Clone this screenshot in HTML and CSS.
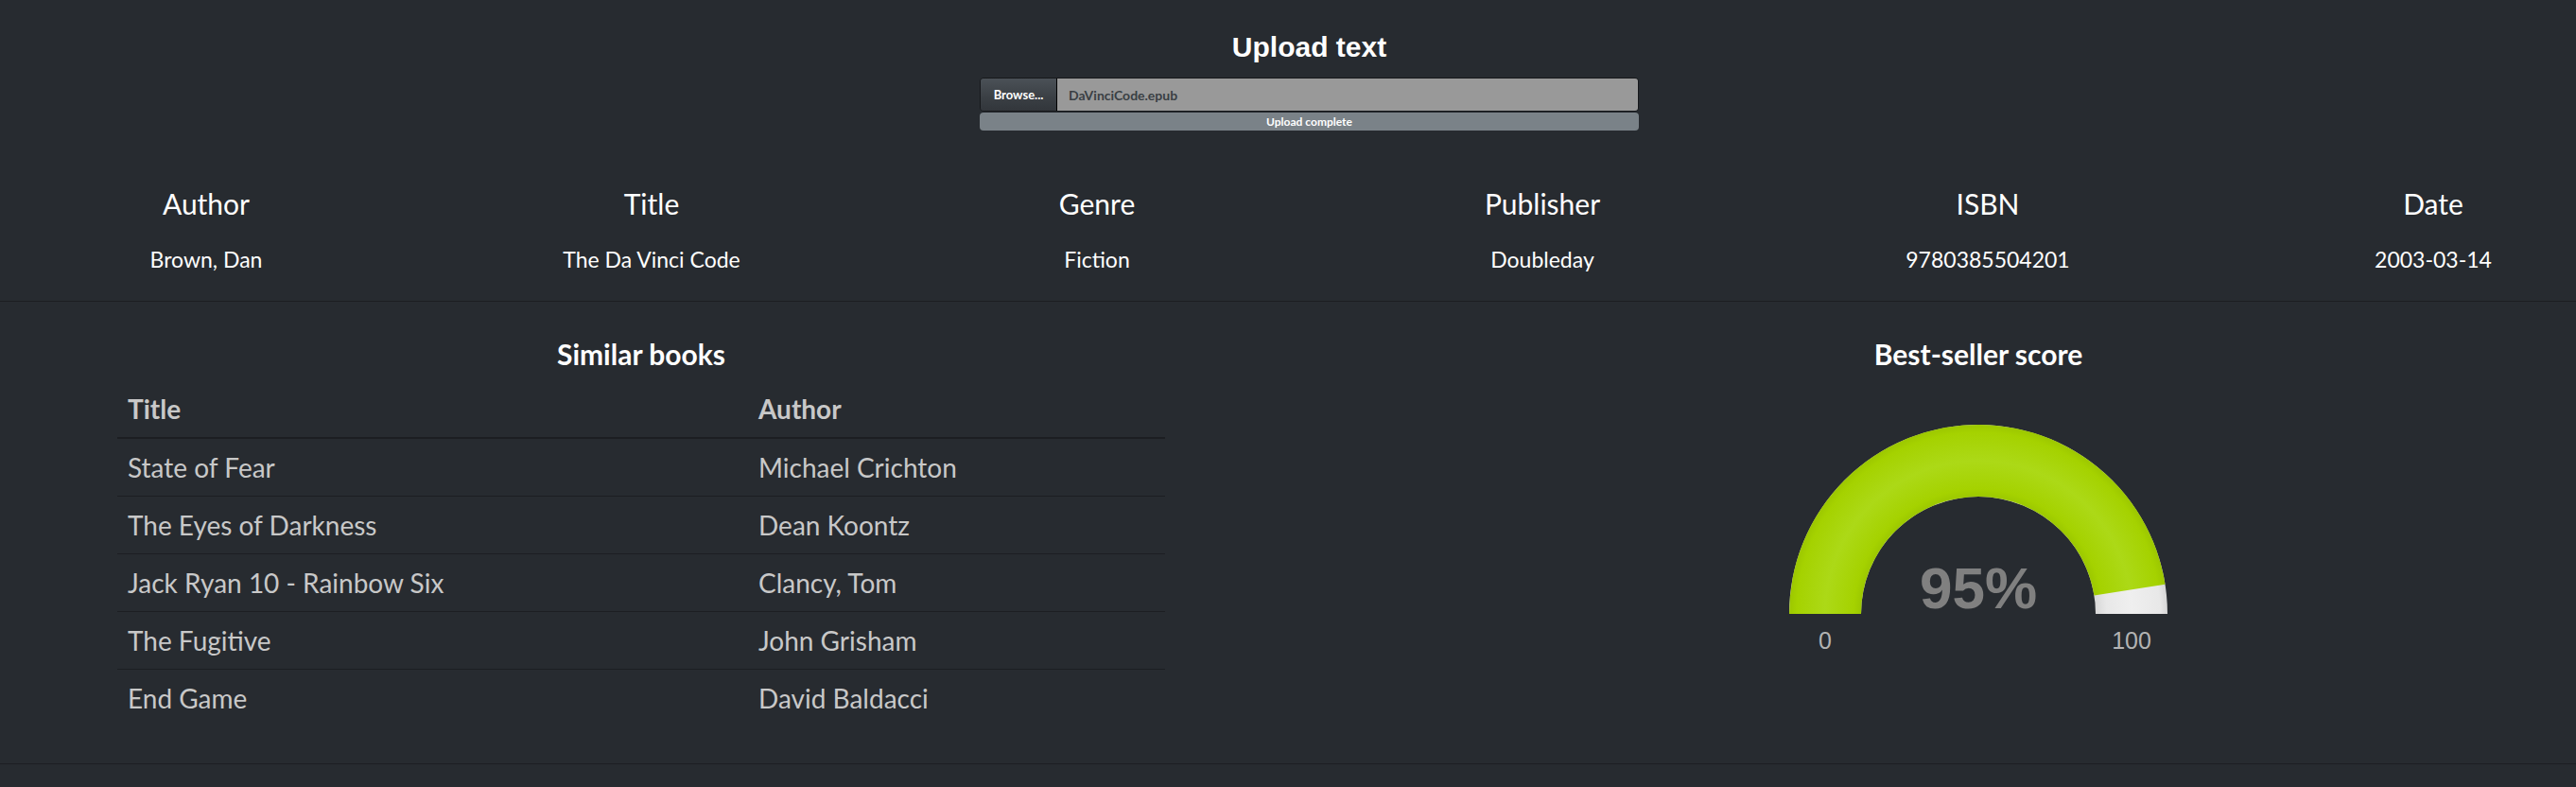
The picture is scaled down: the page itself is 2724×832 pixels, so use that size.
FILE: index.html
```html
<!DOCTYPE html>
<html lang="en">

<head>
  <meta charset="UTF-8">
  <meta name="viewport" content="width=device-width, initial-scale=1.0">
  <title>Book analyzer</title>
  <link rel="stylesheet" href="styles.css">
</head>

<body>
  <div class="upload-panel">
    <h3 class="upload-title">Upload text</h3>
    <div class="file-group">
      <span class="btn-browse">Browse...</span>
      <span class="file-name">DaVinciCode.epub</span>
    </div>
    <div class="progress">
      <div class="progress-bar">Upload complete</div>
    </div>
  </div>

  <div class="meta-row">
    <div class="meta-col">
      <div class="meta-label">Author</div>
      <div class="meta-value">Brown, Dan</div>
    </div>
    <div class="meta-col">
      <div class="meta-label">Title</div>
      <div class="meta-value">The Da Vinci Code</div>
    </div>
    <div class="meta-col">
      <div class="meta-label">Genre</div>
      <div class="meta-value">Fiction</div>
    </div>
    <div class="meta-col">
      <div class="meta-label">Publisher</div>
      <div class="meta-value">Doubleday</div>
    </div>
    <div class="meta-col">
      <div class="meta-label">ISBN</div>
      <div class="meta-value">9780385504201</div>
    </div>
    <div class="meta-col">
      <div class="meta-label">Date</div>
      <div class="meta-value">2003-03-14</div>
    </div>
  </div>

  <div class="results">
    <div class="similar">
      <h4 class="section-title">Similar books</h4>
      <table class="book-table">
        <thead>
          <tr>
            <th class="col-title">Title</th>
            <th>Author</th>
          </tr>
        </thead>
        <tbody>
          <tr><td>State of Fear</td><td>Michael Crichton</td></tr>
          <tr><td>The Eyes of Darkness</td><td>Dean Koontz</td></tr>
          <tr><td>Jack Ryan 10 - Rainbow Six</td><td>Clancy, Tom</td></tr>
          <tr><td>The Fugitive</td><td>John Grisham</td></tr>
          <tr><td>End Game</td><td>David Baldacci</td></tr>
        </tbody>
      </table>
    </div>

    <div class="score">
      <h4 class="section-title">Best-seller score</h4>
      <svg class="gauge" width="440" height="260" viewBox="0 0 440 260">
        <defs>
          <radialGradient id="greenShade" gradientUnits="userSpaceOnUse" cx="220" cy="209" r="200">
            <stop offset="0.62" stop-color="#9cc800"/>
            <stop offset="0.66" stop-color="#a5d200"/>
            <stop offset="0.81" stop-color="#acd917"/>
            <stop offset="0.96" stop-color="#a5d200"/>
            <stop offset="1" stop-color="#9cc700"/>
          </radialGradient>
          <radialGradient id="greyShade" gradientUnits="userSpaceOnUse" cx="220" cy="209" r="200">
            <stop offset="0.62" stop-color="#d8d8d8"/>
            <stop offset="0.68" stop-color="#e8e8e8"/>
            <stop offset="0.81" stop-color="#efefef"/>
            <stop offset="0.96" stop-color="#e8e8e8"/>
            <stop offset="1" stop-color="#d6d6d6"/>
          </radialGradient>
        </defs>
        <path d="M20 209 A200 200 0 0 1 420 209 L344 209 A124 124 0 0 0 96 209 Z" fill="url(#greyShade)"/>
        <path d="M20 209 A200 200 0 0 1 417.54 177.71 L342.47 189.6 A124 124 0 0 0 96 209 Z" fill="url(#greenShade)"/>
        <text class="gauge-value" x="220" y="203" text-anchor="middle">95%</text>
        <text class="gauge-limit" x="58" y="246" text-anchor="middle">0</text>
        <text class="gauge-limit" x="382" y="246" text-anchor="middle">100</text>
      </svg>
    </div>
  </div>
</body>

</html>
```

FILE: styles.css
```css
body {
  margin: 0;
  background: #272b30;
  color: #c8c8c8;
  font-family: Lato, 'Open Sans', sans-serif;
}

/* upload box */

.upload-panel {
  width: 697px;
  margin-left: 1036px;
  padding-top: 33px;
}

.upload-title {
  margin: 0;
  text-align: center;
  font-family: 'Liberation Sans', Arial, sans-serif;
  font-size: 30px;
  line-height: 34px;
  font-weight: bold;
  color: #fff;
}

.file-group {
  display: flex;
  height: 36px;
  margin-top: 15px;
  box-sizing: border-box;
  border: 1px solid #16181b;
  border-radius: 4px;
  overflow: hidden;
}

.btn-browse {
  width: 80px;
  display: flex;
  align-items: center;
  justify-content: center;
  background: linear-gradient(#4b5157, #3a3f44 60%, #32363b);
  border-right: 1px solid #000;
  color: #fff;
  font-size: 13px;
  font-weight: bold;
}

.file-name {
  flex: 1;
  display: flex;
  align-items: center;
  padding-left: 12px;
  background: #999;
  color: #3a3f44;
  font-size: 14px;
  font-weight: bold;
}

.progress {
  height: 19px;
  margin-top: 1px;
  border-radius: 4px;
  overflow: hidden;
  background: #1c1e22;
}

.progress-bar {
  height: 100%;
  background: #7a8288;
  color: #fff;
  text-align: center;
  font-size: 12px;
  line-height: 19px;
  font-weight: bold;
}

/* book details */

.meta-row {
  display: grid;
  grid-template-columns: repeat(6, 300px);
  column-gap: 171px;
  padding: 59px 0 30px 68px;
  border-bottom: 1px solid #1c1e22;
  overflow: hidden;
}

.meta-col {
  text-align: center;
  color: #fff;
}

.meta-label {
  font-size: 30px;
  line-height: 36px;
}

.meta-value {
  margin-top: 27px;
  font-size: 23px;
  line-height: 28px;
}

/* similar books + gauge */

.results {
  display: flex;
  padding-top: 37px;
  padding-bottom: 39px;
  border-bottom: 1px solid #1c1e22;
}

.similar {
  width: 1108px;
  margin-left: 124px;
}

.section-title {
  margin: 0;
  text-align: center;
  color: #fff;
  font-size: 30px;
  line-height: 36px;
  font-weight: bold;
}

.book-table {
  width: 100%;
  margin-top: 10px;
  border-collapse: collapse;
  font-size: 28px;
  line-height: 40px;
}

.book-table th,
.book-table td {
  padding: 10px 11px;
  text-align: left;
  vertical-align: top;
}

.book-table th {
  border-bottom: 2px solid #1c1e22;
  font-weight: bold;
}

.book-table .col-title {
  width: 645px;
}

.book-table td {
  border-top: 1px solid #1c1e22;
}

.book-table tbody tr:first-child td {
  border-top: 0;
}

.score {
  width: 800px;
  margin-left: 460px;
  display: flex;
  flex-direction: column;
  align-items: center;
}

.gauge {
  display: block;
  margin-top: 48px;
}

.gauge-value {
  font-family: 'Liberation Sans', Arial, sans-serif;
  font-size: 62px;
  font-weight: bold;
  fill: #808080;
}

.gauge-limit {
  font-family: 'Liberation Sans', Arial, sans-serif;
  font-size: 25px;
  fill: #b3b3b3;
}
```
